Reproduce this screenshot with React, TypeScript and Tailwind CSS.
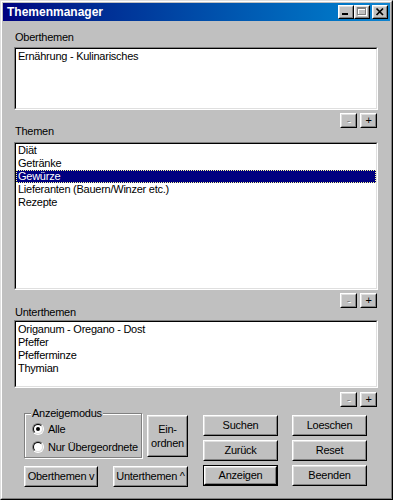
import React from "react";

const FONT = "font-['Liberation_Sans',Arial,sans-serif]";

function Btn({
  className = "",
  children,
  isDefault = false,
}: {
  className?: string;
  children: React.ReactNode;
  isDefault?: boolean;
}) {
  const raised = (
    <div className="h-full w-full border border-t-white border-l-white border-b-black border-r-black">
      <div className="h-full w-full border border-t-[#dfdfdf] border-l-[#dfdfdf] border-b-[#808080] border-r-[#808080] flex items-center justify-center text-center">
        {children}
      </div>
    </div>
  );
  if (isDefault) {
    return <div className={`border border-black ${className}`}>{raised}</div>;
  }
  return <div className={className}>{raised}</div>;
}

function Sunken({ className = "", children }: { className?: string; children?: React.ReactNode }) {
  return (
    <div className={`border border-t-[#808080] border-l-[#808080] border-b-white border-r-white ${className}`}>
      <div className="h-full w-full border border-t-black border-l-black border-b-[#dfdfdf] border-r-[#dfdfdf] bg-white overflow-hidden">
        {children}
      </div>
    </div>
  );
}

function PlusMinus() {
  return (
    <div className="w-[364px] h-[15px] flex justify-end gap-[3px] pr-[1px]">
      <Btn className="w-[17px] h-[15px]">
        <span className="text-[#808080] [text-shadow:1px_1px_0_#ffffff] leading-none -mt-[1px]">-</span>
      </Btn>
      <Btn className="w-[17px] h-[15px]">
        <span className="leading-none -mt-[1px]">+</span>
      </Btn>
    </div>
  );
}

function Radio({ checked, label }: { checked: boolean; label: string }) {
  return (
    <div className="flex items-center h-[12px]">
      <div className="shrink-0 w-[12px] h-[12px] rounded-full border border-t-[#808080] border-l-[#808080] border-b-white border-r-white">
        <div className="w-full h-full rounded-full border border-t-black border-l-black border-b-[#dfdfdf] border-r-[#dfdfdf] bg-white flex items-center justify-center">
          {checked && <div className="w-[4px] h-[4px] rounded-full bg-black" />}
        </div>
      </div>
      <span className="ml-[4px]">{label}</span>
    </div>
  );
}

function TitleBtn({ children, className = "" }: { children: React.ReactNode; className?: string }) {
  return (
    <div className={`w-[16px] h-[14px] bg-[#c0c0c0] ${className}`}>
      <div className="h-full w-full border border-t-white border-l-white border-b-black border-r-black">
        <div className="h-full w-full border border-t-[#dfdfdf] border-l-[#dfdfdf] border-b-[#808080] border-r-[#808080] flex items-center justify-center">
          {children}
        </div>
      </div>
    </div>
  );
}

const THEMEN = ["Diät", "Getränke", "Gewürze", "Lieferanten (Bauern/Winzer etc.)", "Rezepte"];
const UNTER = ["Origanum - Oregano - Dost", "Pfeffer", "Pfefferminze", "Thymian"];

export default function App() {
  return (
    <div className={`w-[393px] h-[500px] bg-[#c0c0c0] ${FONT} text-[11px] leading-[13px] tracking-[-0.25px] whitespace-nowrap text-black`}>
      <div className="h-full border border-t-[#dfdfdf] border-l-[#dfdfdf] border-b-black border-r-black">
        <div className="h-full border border-t-white border-l-white border-b-[#808080] border-r-[#808080] p-px flex flex-col">
          {/* Title bar */}
          <div className="h-[18px] flex items-center bg-linear-to-r from-[#000080] to-[#1084d0] pl-[4px] pr-[2px]">
            <span className="text-white font-bold text-[12px] leading-none tracking-normal">Themenmanager</span>
            <div className="ml-auto flex items-center">
              <TitleBtn>
                <svg width="12" height="10" viewBox="0 0 12 10">
                  <rect x="2" y="6" width="6" height="2" fill="black" />
                </svg>
              </TitleBtn>
              <TitleBtn>
                <svg width="12" height="10" viewBox="0 0 12 10">
                  <g transform="translate(1,1)" fill="white">
                    <rect x="1" y="0" width="9" height="2" />
                    <rect x="1" y="0" width="1" height="8" />
                    <rect x="9" y="0" width="1" height="8" />
                    <rect x="1" y="7" width="9" height="1" />
                  </g>
                  <g fill="#808080">
                    <rect x="1" y="0" width="9" height="2" />
                    <rect x="1" y="0" width="1" height="8" />
                    <rect x="9" y="0" width="1" height="8" />
                    <rect x="1" y="7" width="9" height="1" />
                  </g>
                </svg>
              </TitleBtn>
              <TitleBtn className="ml-[2px]">
                <svg width="12" height="10" viewBox="0 0 12 10">
                  <path d="M2.5 1.5 L9 8 M9 1.5 L2.5 8" stroke="black" strokeWidth="1.7" />
                </svg>
              </TitleBtn>
            </div>
          </div>

          {/* Body */}
          <div className="flex flex-col pl-[11px]">
            <div className="mt-[10px] h-[13px] pl-[1px]">Oberthemen</div>
            <Sunken className="mt-[3px] w-[364px] h-[63px]">
              <div className="pl-[2px] pt-[1px]">Ernährung - Kulinarisches</div>
            </Sunken>
            <div className="mt-[3px]">
              <PlusMinus />
            </div>

            <div className="-mt-[3px] h-[13px] pl-[1px]">Themen</div>
            <Sunken className="mt-[4px] w-[364px] h-[148px]">
              <div className="flex flex-col">
                {THEMEN.map((t) => (
                  <div
                    key={t}
                    className={
                      t === "Gewürze"
                        ? "h-[13px] pl-[2px] bg-[#000080] text-white outline-1 outline-dotted outline-[#ffff99] -outline-offset-1"
                        : "h-[13px] pl-[2px]"
                    }
                  >
                    {t}
                  </div>
                ))}
              </div>
            </Sunken>
            <div className="mt-[3px]">
              <PlusMinus />
            </div>

            <div className="-mt-[2px] h-[13px] pl-[1px]">Unterthemen</div>
            <Sunken className="mt-[1px] w-[364px] h-[68px]">
              <div className="flex flex-col pt-[1px]">
                {UNTER.map((t) => (
                  <div key={t} className="h-[13px] pl-[2px]">
                    {t}
                  </div>
                ))}
              </div>
            </Sunken>
            <div className="mt-[4px]">
              <PlusMinus />
            </div>

            {/* Bottom controls */}
            <div className="mt-[6px] flex ml-[10px]">
              <div className="flex flex-col w-[164px]">
                <div className="flex">
                  <div className="relative w-[118px] h-[45px] border border-[#808080] shadow-[inset_1px_1px_0_#ffffff,1px_1px_0_#ffffff]">
                    <span className="absolute -top-[7px] left-[6px] bg-[#c0c0c0] px-[1px]">Anzeigemodus</span>
                    <div className="flex flex-col gap-[6px] pt-[9px] pl-[7px]">
                      <Radio checked label="Alle" />
                      <Radio checked={false} label="Nur Übergeordnete" />
                    </div>
                  </div>
                  <Btn className="ml-[5px] mt-[2px] w-[41px] h-[42px]">
                    <span className="leading-[14px]">
                      Ein-
                      <br />
                      ordnen
                    </span>
                  </Btn>
                </div>
                <div className="flex mt-[8px]">
                  <Btn className="w-[74px] h-[21px]">Oberthemen v</Btn>
                  <Btn className="ml-[15px] w-[75px] h-[21px]">Unterthemen ^</Btn>
                </div>
              </div>

              <div className="ml-[15px] mt-[2px] grid grid-cols-[75px_75px] gap-x-[14px] gap-y-[4px] auto-rows-[21px]">
                <Btn>Suchen</Btn>
                <Btn>Loeschen</Btn>
                <Btn>Zurück</Btn>
                <Btn>Reset</Btn>
                <Btn isDefault>Anzeigen</Btn>
                <Btn>Beenden</Btn>
              </div>
            </div>
          </div>
        </div>
      </div>
    </div>
  );
}
